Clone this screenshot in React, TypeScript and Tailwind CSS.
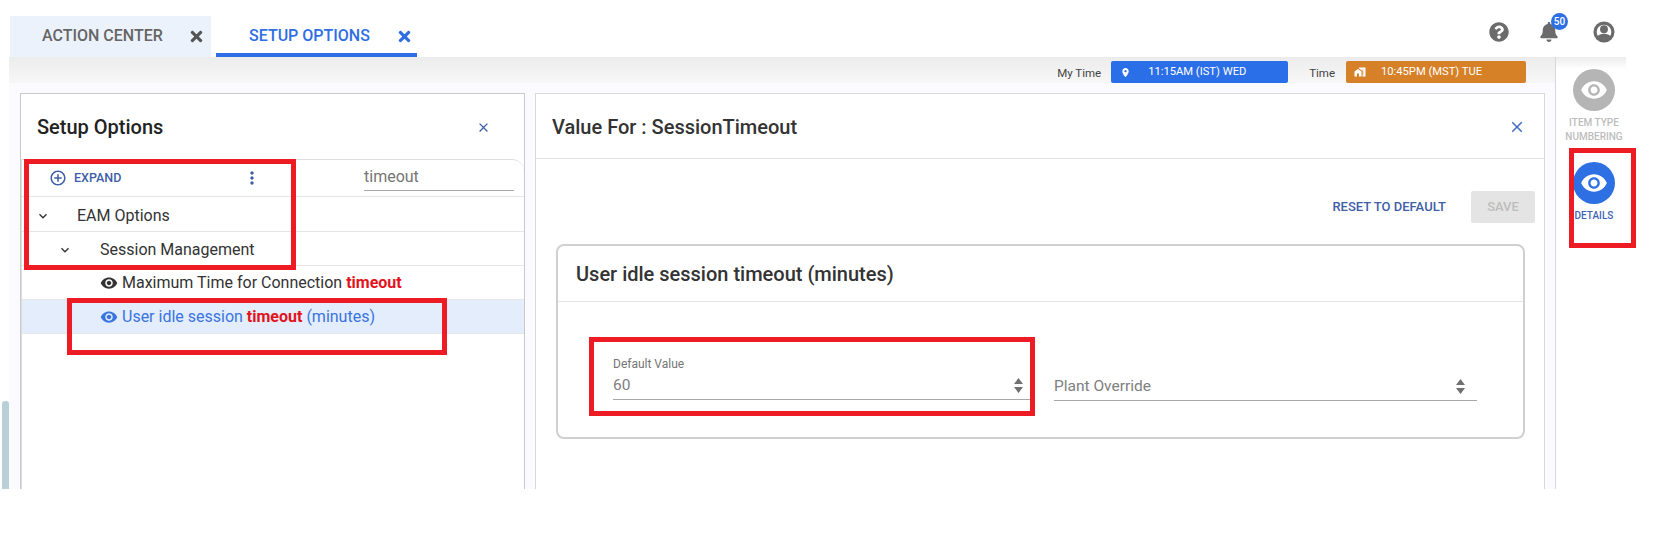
import { FaBell, FaQuestionCircle, FaTimes } from 'react-icons/fa'
import {
  MdAddCircleOutline,
  MdClose,
  MdExpandMore,
  MdHomeWork,
  MdLocationOn,
  MdMoreVert,
  MdVisibility,
} from 'react-icons/md'

function Highlight({ className }: { className: string }) {
  return <div className={`absolute border-[5px] border-[#ed1c24] pointer-events-none ${className}`} />
}

function UserIcon() {
  return (
    <svg width="22" height="22" viewBox="0 0 24 24" className="ml-[34px]">
      <circle cx="12" cy="12" r="11.5" fill="#6b6b6b" />
      <circle cx="12" cy="12" r="8" fill="#fff" />
      <circle cx="12" cy="9" r="4.300" fill="#6b6b6b" />
      <path d="M4 17.500c2-2.600 5-3.700 8-3.700s6 1.100 8 3.700c-2 3-5 4.500-8 4.500s-6-1.500-8-4.500z" fill="#6b6b6b" />
    </svg>
  )
}

function SortIcon() {
  return (
    <svg width="9" height="15" viewBox="0 0 9 15" className="text-[#707070]">
      <path d="M4.500 0L9 6H0zM4.500 15L0 9h9z" fill="currentColor" />
    </svg>
  )
}

function SideItem({ label, active }: { label: string[]; active?: boolean }) {
  return (
    <div className="flex flex-col items-center">
      <div
        className={`w-[42px] h-[42px] rounded-full flex items-center justify-center text-white ${
          active ? 'bg-[#2f6fe4]' : 'bg-[#b5b5b5]'
        }`}
      >
        <MdVisibility size={28} />
      </div>
      <div
        className={`mt-[5px] text-[10px] leading-[14px] font-medium text-center whitespace-nowrap ${
          active ? 'text-[#3f64b8]' : 'text-[#bdbdbd]'
        }`}
      >
        {label.map((l) => (
          <div key={l}>{l}</div>
        ))}
      </div>
    </div>
  )
}

function TreeRow({ children, className = '' }: { children: React.ReactNode; className?: string }) {
  return <div className={`flex items-center border-b border-[#e6e6e6] ${className}`}>{children}</div>
}

function SelectField({
  label,
  value,
  className,
  rowClass,
}: {
  label?: string
  value: string
  className: string
  rowClass: string
}) {
  return (
    <div className={`h-[44px] flex flex-col justify-end border-b border-[#a8a8a8] ${className}`}>
      {label && <div className="text-[12px] leading-[14px] text-[#757575] mb-[4px]">{label}</div>}
      <div className={`flex items-center justify-between pb-[4px] text-[15.5px] leading-[20px] text-[#808080] ${rowClass}`}>
        <span>{value}</span>
        <SortIcon />
      </div>
    </div>
  )
}

export default function App() {
  return (
    <div
      className="relative w-[1666px] h-[538px] bg-white overflow-hidden"
      style={{ fontFamily: 'Roboto, sans-serif' }}
    >
      {/* top tabs */}
      <div className="flex h-[57px] pl-[10px] pt-[16px]">
        <div className="w-[201px] bg-[#ebf2fc] flex items-center pl-[32px] text-[#666] font-medium text-[16px] pb-[1px]">
          <span>ACTION CENTER</span>
          <FaTimes size={17} className="ml-[25px] text-[#555]" />
        </div>
        <div className="ml-[5px] w-[201px] border-b-[4px] border-[#2f6fe4] flex items-center pl-[33px] text-[#2f6fe4] font-medium text-[16px] pt-[3px]">
          <span>SETUP OPTIONS</span>
          <FaTimes size={17} className="ml-[26px]" />
        </div>
        <div className="flex-1 flex items-center justify-end pr-[51px] pb-[9px] text-[#6b6b6b]">
          <FaQuestionCircle size={20} />
          <div className="relative ml-[30px]">
            <FaBell size={20} />
            <div className="absolute -top-[9px] left-[12px] w-[17px] h-[17px] rounded-full bg-[#2f6fe4] text-white text-[10px] font-medium flex items-center justify-center">
              50
            </div>
          </div>
          <UserIcon />
        </div>
      </div>

      <div className="flex h-[432px] pl-[2px]">
        {/* page scrollbar */}
        <div className="w-[7px] flex items-end">
          <div className="w-full h-[88px] bg-[#b9d0d8] rounded-t-[3px]" />
        </div>

        <div className="w-[1547px] flex flex-col bg-[#fafaff] border-r border-[#d8d8d8]">
          {/* time strip */}
          <div className="h-[26px] shrink-0 bg-gradient-to-b from-[#ececec] to-[#f7f7f7] flex items-end pr-[29px] justify-end text-[11.5px] text-[#444]">
            <span className="self-center mt-[8px]">My Time</span>
            <div className="ml-[10px] w-[177px] h-[22px] rounded-[2px] bg-[#2a6ee8] text-white flex items-center pl-[9px]">
              <MdLocationOn size={11} />
              <span className="ml-[17px] text-[11.2px]">11:15AM (IST) WED</span>
            </div>
            <span className="self-center mt-[8px] ml-[21px]">Time</span>
            <div className="ml-[11px] w-[180px] h-[22px] rounded-[2px] bg-[#d68027] text-white flex items-center pl-[8px]">
              <MdHomeWork size={12} />
              <span className="ml-[15px] text-[11.2px]">10:45PM (MST) TUE</span>
            </div>
          </div>

          {/* panels */}
          <div className="flex-1 flex pt-[10px] pl-[11px] pr-[10px] min-h-0">
            <div className="w-[505px] bg-white border border-b-0 border-[#c9c9c9] flex flex-col">
              <div className="h-[65px] shrink-0 flex items-center justify-between pl-[16px] pr-[33px] pt-[1px]">
                <span className="text-[20px] font-medium text-[#222]">Setup Options</span>
                <MdClose size={15} className="text-[#3f5ea8]" />
              </div>
              <div className="border border-b-0 border-r-0 border-[#dedede] rounded-tr-[12px] flex-1">
                <TreeRow className="h-[37px] justify-between pr-[10px]">
                  <div className="flex items-center pl-[27px]">
                    <MdAddCircleOutline size={18} className="text-[#3f5ea8]" />
                    <span className="ml-[7px] text-[12.5px] font-medium text-[#3f5ea8]">EXPAND</span>
                    <MdMoreVert size={20} className="ml-[121px] text-[#3f5ea8]" />
                  </div>
                  <div className="w-[150px] h-[31px] border-b border-[#a8a8a8] text-[16px] text-[#757575] mt-[-6px] pt-[5px]">
                    timeout
                  </div>
                </TreeRow>
                <TreeRow className="h-[35px] pl-[13px] pt-[3px] text-[16px] text-[#333]">
                  <MdExpandMore size={16} />
                  <span className="ml-[26px]">EAM Options</span>
                </TreeRow>
                <TreeRow className="h-[34px] pl-[35px] pt-[2px] text-[16px] text-[#333]">
                  <MdExpandMore size={16} />
                  <span className="ml-[27px]">Session Management</span>
                </TreeRow>
                <TreeRow className="h-[34px] pl-[78px] pt-[1px] text-[16px] text-[#333]">
                  <MdVisibility size={18} />
                  <span className="ml-[4px]">
                    Maximum Time for Connection <b className="font-bold text-[#e3131b]">timeout</b>
                  </span>
                </TreeRow>
                <TreeRow className="h-[34px] pl-[78px] pt-[1px] text-[16px] text-[#3a74e0] bg-[#e3edfb]">
                  <MdVisibility size={18} />
                  <span className="ml-[4px]">
                    User idle session <b className="font-bold text-[#e3131b]">timeout</b> (minutes)
                  </span>
                </TreeRow>
              </div>
            </div>

            <div className="ml-[10px] flex-1 bg-white border border-b-0 border-[#d8d8d8] flex flex-col">
              <div className="h-[65px] shrink-0 border-b border-[#e2e2e2] flex items-center justify-between pl-[16px] pr-[18px] pt-[1px]">
                <span className="text-[20px] font-medium text-[#333]">Value For : SessionTimeout</span>
                <MdClose size={18} className="text-[#3f6cc4]" />
              </div>
              <div className="flex items-center justify-end mt-[32px] h-[32px] pr-[9px]">
                <span className="text-[13px] font-medium text-[#3f5ea8]">RESET TO DEFAULT</span>
                <div className="ml-[25px] w-[64px] h-[32px] rounded-[2px] bg-[#e4e4e4] text-[#bdbdbd] text-[13px] font-medium flex items-center justify-center">
                  SAVE
                </div>
              </div>
              <div className="mt-[21px] ml-[20px] w-[969px] h-[195px] border-2 border-[#d0d0d0] rounded-[8px]">
                <div className="h-[56px] border-b border-[#e4e4e4] flex items-center pl-[18px] text-[20px] font-medium text-[#333]">
                  User idle session timeout (minutes)
                </div>
                <div className="flex items-start pt-[54px] pl-[55px]">
                  <SelectField label="Default Value" value="60" className="w-[417px]" rowClass="pr-[7px]" />
                  <SelectField value="Plant Override" className="ml-[24px] w-[423px] mt-[1px]" rowClass="pr-[12px]" />
                </div>
              </div>
            </div>
          </div>
        </div>

        {/* right rail */}
        <div className="flex-1 flex flex-col">
          <div className="h-[12px] w-[70px] bg-gradient-to-b from-[#ececec] to-white" />
          <div className="w-[76px] flex flex-col items-center gap-[18px]">
            <SideItem label={['ITEM TYPE', 'NUMBERING']} />
            <SideItem label={['DETAILS']} active />
          </div>
        </div>
      </div>

      {/* red annotation boxes */}
      <Highlight className="left-[24px] top-[159px] w-[272px] h-[111px]" />
      <Highlight className="left-[67px] top-[298px] w-[380px] h-[57px]" />
      <Highlight className="left-[589px] top-[337px] w-[446px] h-[79px]" />
      <Highlight className="left-[1569px] top-[148px] w-[67px] h-[100px]" />
    </div>
  )
}
